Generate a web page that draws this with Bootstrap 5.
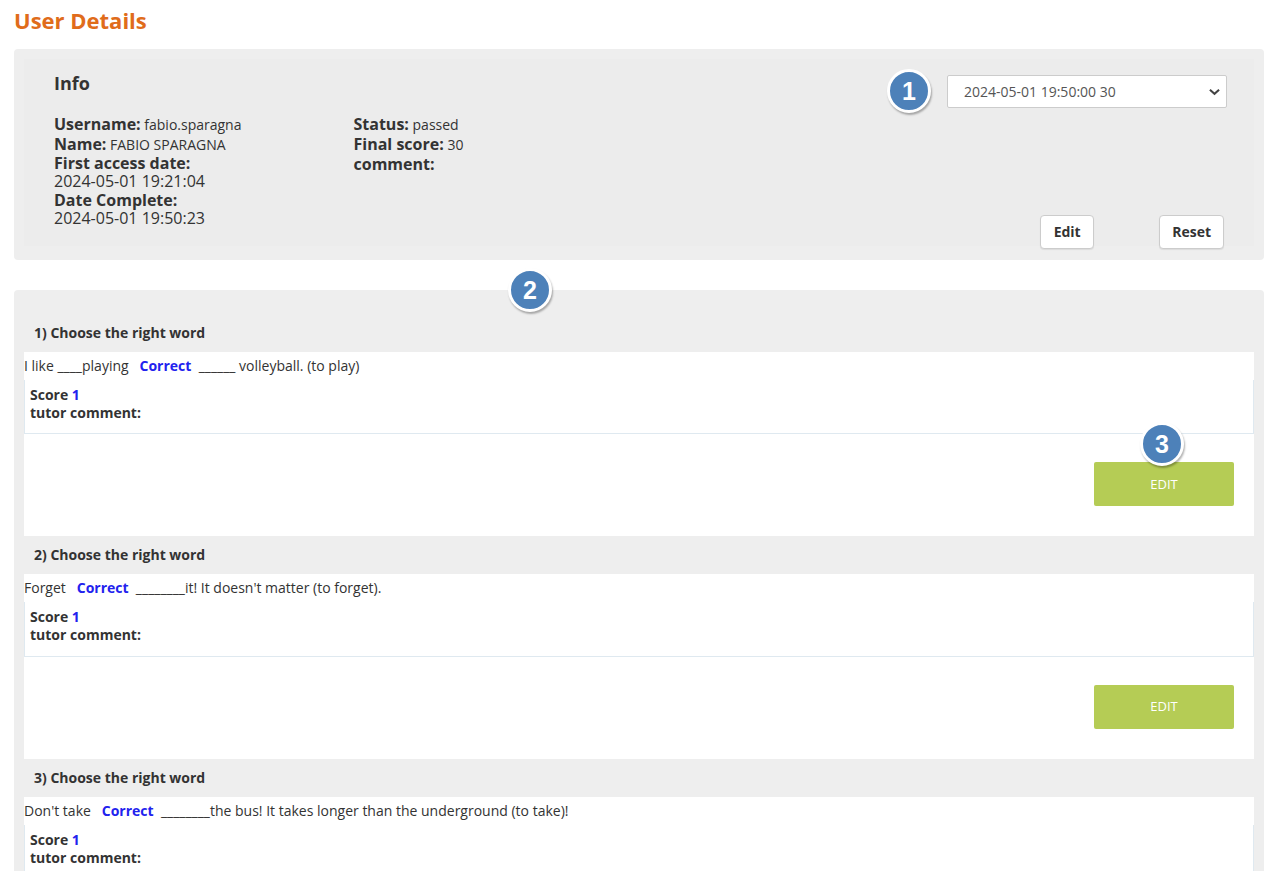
<!DOCTYPE html>
<html lang="en">
<head>
<meta charset="utf-8">
<title>User Details</title>
<link href="https://cdn.jsdelivr.net/npm/bootstrap@5.3.0/dist/css/bootstrap.min.css" rel="stylesheet">
<style>
html,body{height:871px;overflow:hidden}
body{font-family:"Open Sans","Liberation Sans",sans-serif;font-size:14px;color:#333;background:#fff;position:relative}
.page-wrap{padding:0 21px 0 14px}
.page-title{font-size:22px;font-weight:700;color:#e06c1b;line-height:27px;margin:7px 0 15px}
.panel-outer{background:#eee;border-radius:4px;padding:10px}
.info-panel{padding-bottom:14px}
.info-inner{background:#ececec;height:187px;padding:12px 27px 0 30px;display:flex;justify-content:space-between}
.info-left{width:600px}
.info-title{font-size:18px;font-weight:700;line-height:24px;margin-bottom:20px}
.info-cols{display:flex}
.info-col{width:299.5px}
.info-line{line-height:20px;font-size:14px}
.info-line b{font-size:16px;font-weight:700;line-height:1}
.info-stack{font-size:16px;line-height:18.4px}
.info-stack b{font-weight:700;display:block}
.info-first{margin-top:-1px}
.info-right{width:280px;display:flex;flex-direction:column;justify-content:space-between;padding-top:4px}
.attempt-select{height:33px;margin-top:0;border:1px solid #ccc;border-radius:2px;font-size:14px;color:#555;padding:0 30px 0 16px;line-height:31px;font-family:inherit;background-image:url("data:image/svg+xml,%3csvg xmlns='http://www.w3.org/2000/svg' viewBox='0 0 12 8'%3e%3cpath fill='none' stroke='%23444' stroke-width='2.2' d='M1 1.5l5 4.5 5-4.5'/%3e%3c/svg%3e");background-size:11px 8px;background-position:right 6px center}
.info-actions{display:flex;justify-content:flex-end;gap:65px;padding-right:3px;margin-bottom:-3px}
.plain-btn{height:34px;padding:0 12px;font-size:14px;font-weight:700;color:#333;background:#fff;border:1px solid #ccc;border-radius:4px;box-shadow:0 1px 1px rgba(0,0,0,.08);line-height:32px}
.plain-btn-edit{min-width:54px}
.questions-panel{margin-top:30px;padding-top:29px}
.q-head{font-size:14px;font-weight:700;line-height:19px;padding:4px 10px 0;height:33px}
.q-block{background:#fff;height:184.4px}
.q-block+.q-head{margin-top:0;padding-top:9px;height:38px}
.q-text{line-height:27px;height:28px}
.q-correct{color:#2222ee;font-weight:700}
.q-box{height:54.4px;border:1px solid #dfe9f0;border-top:0;padding:6px 5px 0;font-weight:700;line-height:18px;background:#fff}
.q-box span{color:#2222ee}
.q-actions{display:flex;justify-content:flex-end;padding:28px 20px 0 0}
.edit-btn{width:140px;height:44px;background:#b5cc55;color:#fff;border:0;border-radius:2px;font-size:13px;text-transform:uppercase;padding:0}
.marker{position:absolute;width:44px;height:44px;border-radius:50%;background:#4d81b9;border:3px solid #fff;box-shadow:1px 2px 2px rgba(0,0,0,.3);color:#fff;font-family:"Liberation Sans",sans-serif;font-weight:700;font-size:25px;display:flex;align-items:center;justify-content:center;line-height:1}
.m1{left:887px;top:69px}.m2{left:508px;top:268px}.m3{left:1140px;top:422px}
</style>
</head>
<body>
<div class="page-wrap">
  <h1 class="page-title">User Details</h1>
  <section class="panel-outer info-panel">
    <div class="info-inner">
      <div class="info-left">
        <h2 class="info-title">Info</h2>
        <div class="info-cols">
          <div class="info-col">
            <div class="info-line"><b>Username:</b> fabio.sparagna</div>
            <div class="info-line"><b>Name:</b> FABIO SPARAGNA</div>
            <div class="info-stack info-first"><b>First access date:</b>2024-05-01 19:21:04</div>
            <div class="info-stack"><b>Date Complete:</b>2024-05-01 19:50:23</div>
          </div>
          <div class="info-col">
            <div class="info-line"><b>Status:</b> passed</div>
            <div class="info-line"><b>Final score:</b> 30</div>
            <div class="info-line"><b>comment:</b></div>
          </div>
        </div>
      </div>
      <div class="info-right">
        <select class="form-select attempt-select"><option>2024-05-01 19:50:00 30</option></select>
        <div class="info-actions">
          <button class="btn plain-btn plain-btn-edit">Edit</button>
          <button class="btn plain-btn">Reset</button>
        </div>
      </div>
    </div>
  </section>
  <section class="panel-outer questions-panel">
    <div class="q-head">1) Choose the right word</div>
    <div class="q-block">
      <div class="q-text">I like ____playing &nbsp; <span class="q-correct">Correct</span> &nbsp;______ volleyball. (to play)</div>
      <div class="q-box">Score <span>1</span><br>tutor comment:</div>
      <div class="q-actions"><button class="btn edit-btn">Edit</button></div>
    </div>
    <div class="q-head">2) Choose the right word</div>
    <div class="q-block">
      <div class="q-text">Forget &nbsp; <span class="q-correct">Correct</span> &nbsp;________it! It doesn't matter (to forget).</div>
      <div class="q-box">Score <span>1</span><br>tutor comment:</div>
      <div class="q-actions"><button class="btn edit-btn">Edit</button></div>
    </div>
    <div class="q-head">3) Choose the right word</div>
    <div class="q-block">
      <div class="q-text">Don't take &nbsp; <span class="q-correct">Correct</span> &nbsp;________the bus! It takes longer than the underground (to take)!</div>
      <div class="q-box">Score <span>1</span><br>tutor comment:</div>
    </div>
  </section>
</div>
<div class="marker m1">1</div>
<div class="marker m2">2</div>
<div class="marker m3">3</div>
<script src="https://cdn.jsdelivr.net/npm/bootstrap@5.3.0/dist/js/bootstrap.bundle.min.js"></script>
</body>
</html>
